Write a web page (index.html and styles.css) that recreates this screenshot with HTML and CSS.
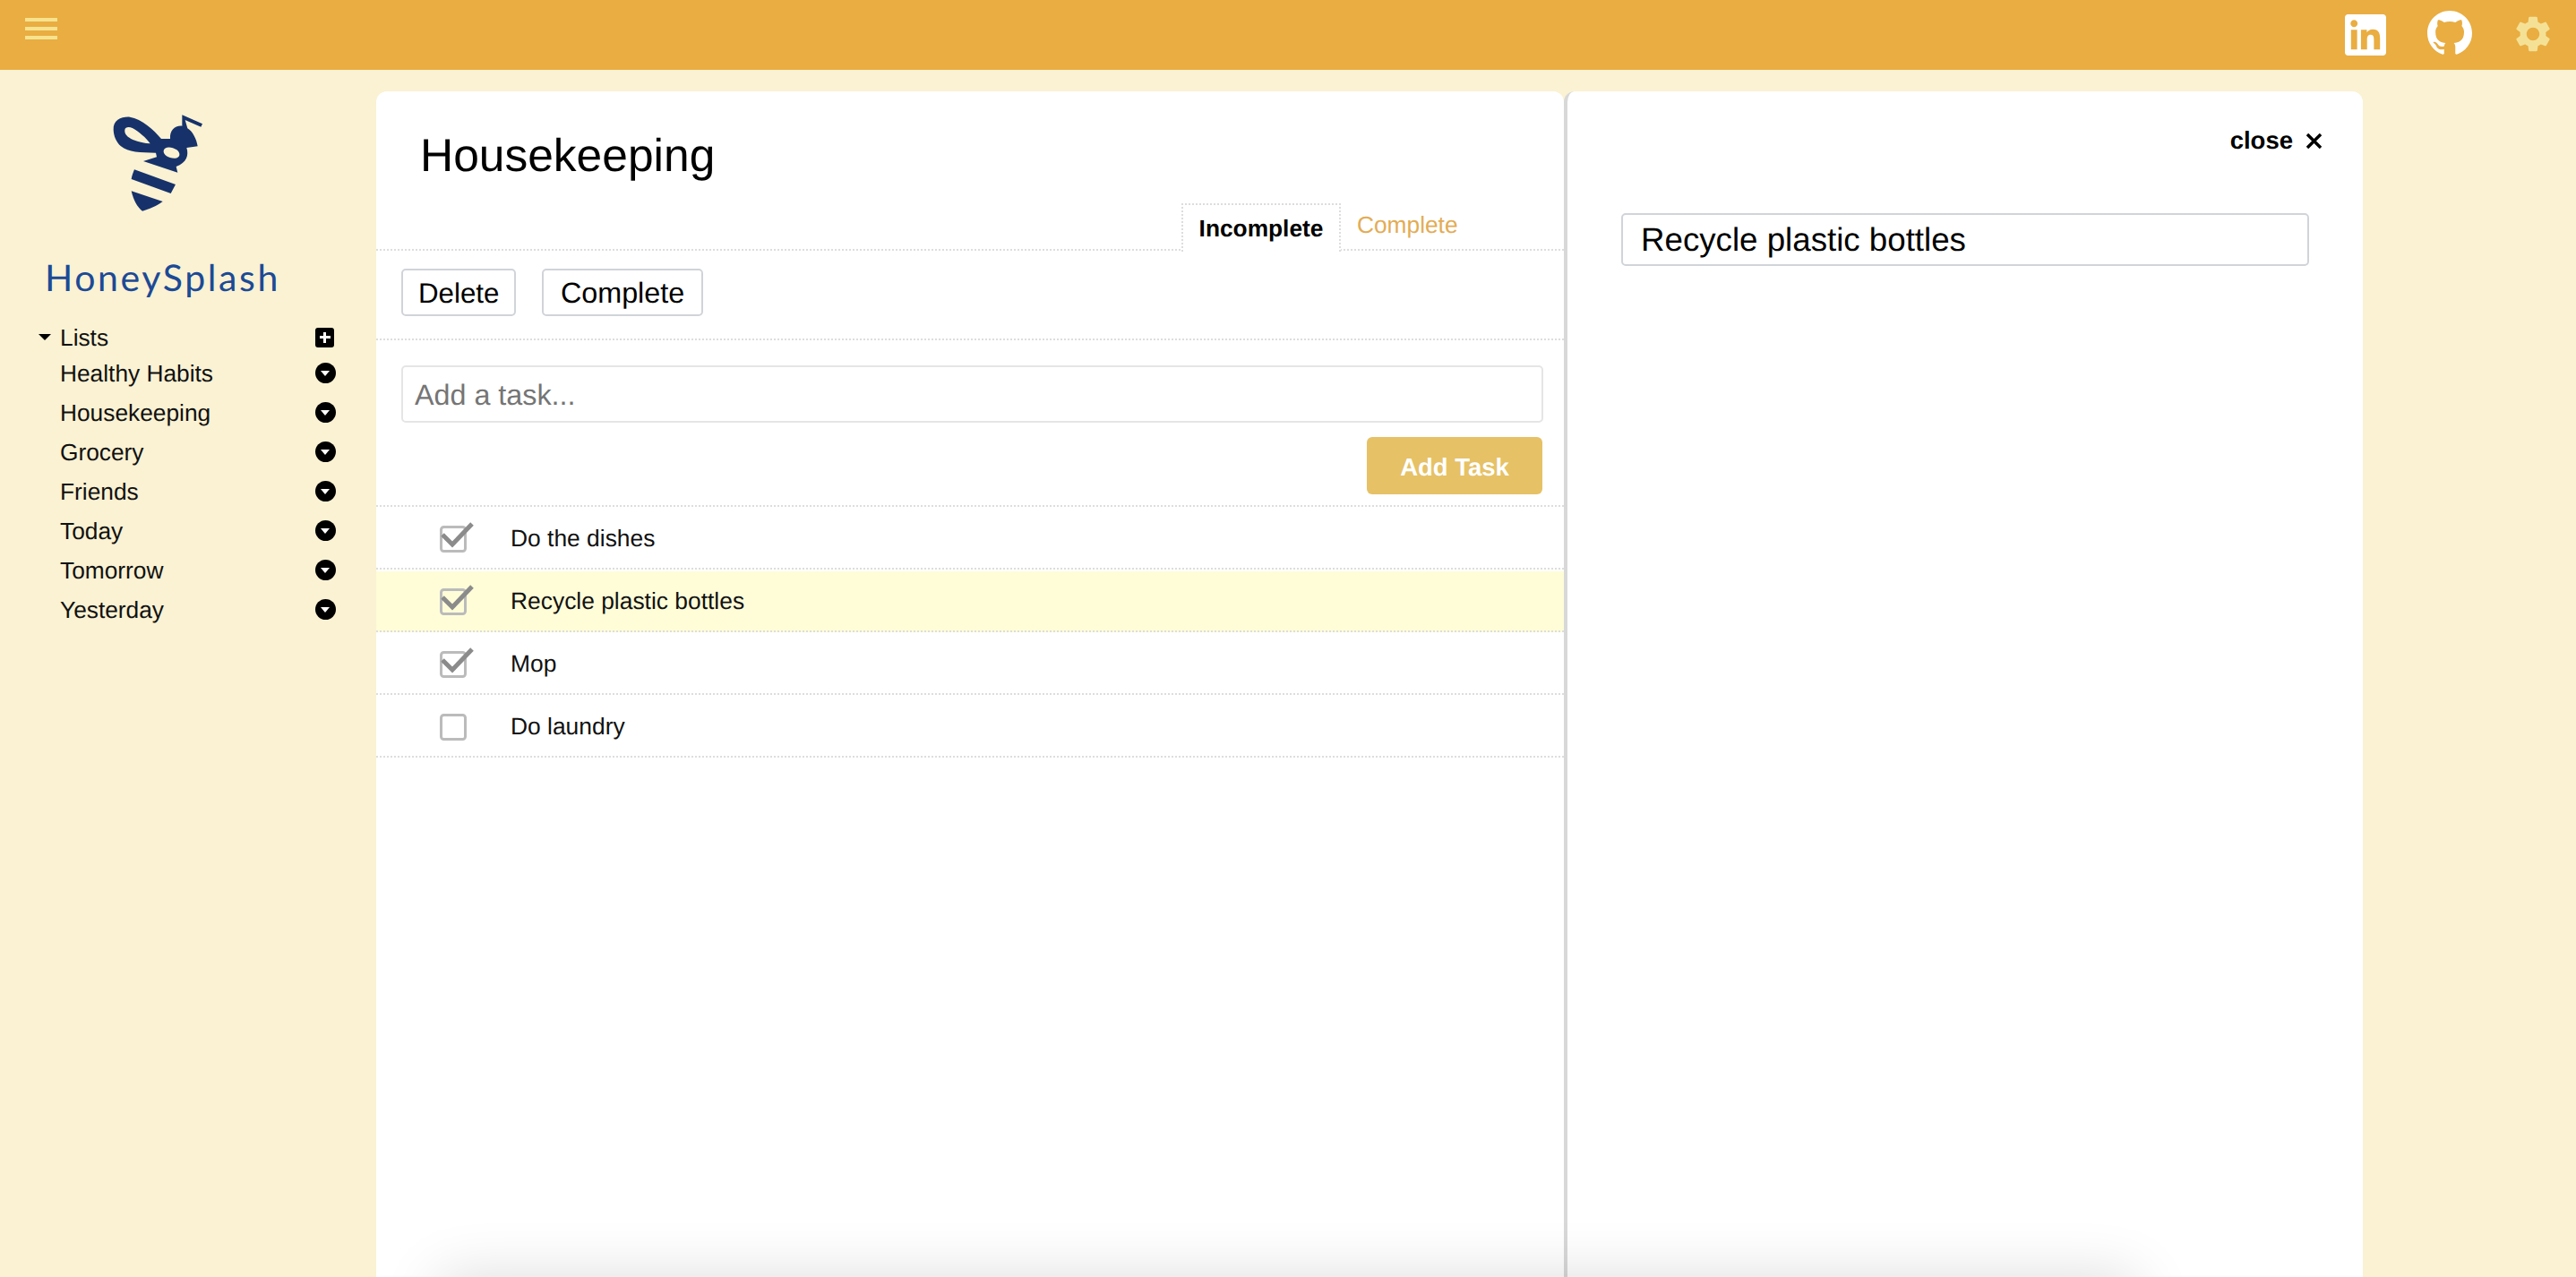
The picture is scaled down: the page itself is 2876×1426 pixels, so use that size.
FILE: index.html
```html
<!DOCTYPE html>
<html lang="en">
<head>
<meta charset="utf-8">
<title>HoneySplash</title>
<link rel="stylesheet" href="styles.css">
</head>
<body>
<header class="topbar">
  <button class="burger" aria-label="Menu"><span></span><span></span><span></span></button>
  <div class="top-icons">
    <svg class="ico-linkedin" viewBox="0 0 24 24"><path d="M20.447 20.452h-3.554v-5.569c0-1.328-.027-3.037-1.852-3.037-1.853 0-2.136 1.445-2.136 2.939v5.667H9.351V9h3.414v1.561h.046c.477-.9 1.637-1.85 3.37-1.85 3.601 0 4.267 2.37 4.267 5.455v6.286zM5.337 7.433c-1.144 0-2.063-.926-2.063-2.065 0-1.138.92-2.063 2.063-2.063 1.14 0 2.064.925 2.064 2.063 0 1.139-.925 2.065-2.064 2.065zm1.782 13.019H3.555V9h3.564v11.452zM22.225 0H1.771C.792 0 0 .774 0 1.729v20.542C0 23.227.792 24 1.771 24h20.451C23.2 24 24 23.227 24 22.271V1.729C24 .774 23.2 0 22.222 0h.003z"/></svg>
    <svg class="ico-github" viewBox="0 0 16 16"><path d="M8 0C3.58 0 0 3.58 0 8c0 3.54 2.29 6.53 5.47 7.59.4.07.55-.17.55-.38 0-.19-.01-.82-.01-1.49-2.01.37-2.53-.49-2.69-.94-.09-.23-.48-.94-.82-1.13-.28-.15-.68-.52-.01-.53.63-.01 1.08.58 1.23.82.72 1.21 1.87.87 2.33.66.07-.52.28-.87.51-1.07-1.78-.2-3.64-.89-3.64-3.95 0-.87.31-1.59.82-2.15-.08-.2-.36-1.02.08-2.12 0 0 .67-.21 2.2.82.64-.18 1.32-.27 2-.27.68 0 1.36.09 2 .27 1.53-1.04 2.2-.82 2.2-.82.44 1.1.16 1.92.08 2.12.51.56.82 1.27.82 2.15 0 3.07-1.87 3.75-3.65 3.95.29.25.54.73.54 1.48 0 1.07-.01 1.93-.01 2.2 0 .21.15.46.55.38A8.013 8.013 0 0016 8c0-4.42-3.58-8-8-8z"/></svg>
    <svg class="ico-gear" viewBox="0 0 24 24"><path d="M19.14 12.94c.04-.3.06-.61.06-.94 0-.32-.02-.64-.07-.94l2.03-1.58c.18-.14.23-.41.12-.61l-1.92-3.32c-.12-.22-.37-.29-.59-.22l-2.39.96c-.5-.38-1.03-.7-1.62-.94l-.36-2.54c-.04-.24-.24-.41-.48-.41h-3.84c-.24 0-.43.17-.47.41l-.36 2.54c-.59.24-1.13.57-1.62.94l-2.39-.96c-.22-.08-.47 0-.59.22L2.74 8.87c-.12.21-.08.47.12.61l2.03 1.58c-.05.3-.09.63-.09.94s.02.64.07.94l-2.03 1.58c-.18.14-.23.41-.12.61l1.92 3.32c.12.22.37.29.59.22l2.39-.96c.5.38 1.03.7 1.62.94l.36 2.54c.05.24.24.41.48.41h3.84c.24 0 .44-.17.47-.41l.36-2.54c.59-.24 1.13-.56 1.62-.94l2.39.96c.22.08.47 0 .59-.22l1.92-3.32c.12-.22.07-.47-.12-.61l-2.01-1.58zM12 15.6c-1.98 0-3.6-1.62-3.6-3.6s1.62-3.6 3.6-3.6 3.6 1.62 3.6 3.6-1.62 3.6-3.6 3.6z"/></svg>
  </div>
</header>

<div class="layout">
  <aside class="sidebar">
    <svg class="bee" viewBox="0 0 450 420">
      <path fill-rule="evenodd" d="M80 105C78 72 108 60 135 62C175 68 215 105 240 135L270 135C268 108 285 90 310 92L310 55L378 85L373 95L320 72L328 100C345 110 358 135 362 160L325 165C333 190 325 215 290 228L295 248L180 210L225 196L222 182C170 182 130 180 105 160C88 145 81 125 80 105ZM118 105C116 120 128 130 145 138C165 146 185 150 203 151C188 130 165 112 145 100C132 94 120 95 118 105ZM248 175C246 190 268 202 288 200C305 198 305 182 292 172C275 160 250 160 248 175Z"/>
      <path d="M150 238L288 288L272 318L140 270C142 258 146 248 150 238Z"/>
      <path d="M140 310L245 345C222 362 200 370 177 377C160 365 147 340 140 310Z"/>
    </svg>
    <div class="brand">HoneySplash</div>
    <nav class="lists">
      <div class="list-head">
        <span class="caret"></span><span class="list-name">Lists</span>
        <span class="plus"></span>
      </div>
      <div class="list-row"><span class="list-name">Healthy Habits</span><span class="drop"></span></div>
      <div class="list-row"><span class="list-name">Housekeeping</span><span class="drop"></span></div>
      <div class="list-row"><span class="list-name">Grocery</span><span class="drop"></span></div>
      <div class="list-row"><span class="list-name">Friends</span><span class="drop"></span></div>
      <div class="list-row"><span class="list-name">Today</span><span class="drop"></span></div>
      <div class="list-row"><span class="list-name">Tomorrow</span><span class="drop"></span></div>
      <div class="list-row"><span class="list-name">Yesterday</span><span class="drop"></span></div>
    </nav>
  </aside>

  <main class="card">
    <section class="tasks">
      <div class="tasks-head">
        <h1 class="title">Housekeeping</h1>
        <div class="tabs">
          <span class="tab tab-active">Incomplete</span>
          <span class="tab tab-idle">Complete</span>
        </div>
      </div>
      <div class="toolbar">
        <button class="btn">Delete</button>
        <button class="btn btn-wide">Complete</button>
      </div>
      <div class="add">
        <input class="add-input" placeholder="Add a task...">
        <button class="add-btn">Add Task</button>
      </div>
      <div class="row">
        <svg class="check" viewBox="0 0 30 30"><rect x="1.5" y="1.5" width="27" height="27" rx="3"/><polyline points="3,10 14,21 36,-2"/></svg>
        <span>Do the dishes</span>
      </div>
      <div class="row row-selected">
        <svg class="check" viewBox="0 0 30 30"><rect x="1.5" y="1.5" width="27" height="27" rx="3"/><polyline points="3,10 14,21 36,-2"/></svg>
        <span>Recycle plastic bottles</span>
      </div>
      <div class="row">
        <svg class="check" viewBox="0 0 30 30"><rect x="1.5" y="1.5" width="27" height="27" rx="3"/><polyline points="3,10 14,21 36,-2"/></svg>
        <span>Mop</span>
      </div>
      <div class="row">
        <svg class="check" viewBox="0 0 30 30"><rect x="1.5" y="1.5" width="27" height="27" rx="3"/></svg>
        <span>Do laundry</span>
      </div>
    </section>
    <section class="detail">
      <div class="close">
        <span>close</span>
        <svg class="close-x" viewBox="0 0 17 17"><path d="M1 1L16 16M16 1L1 16"/></svg>
      </div>
      <input class="detail-input" value="Recycle plastic bottles">
    </section>
  </main>
</div>
<div class="foot-shadow"></div>
</body>
</html>
```

FILE: styles.css
```css
html, body {
  margin: 0;
  height: 100%;
  overflow: hidden;
}
body {
  position: relative;
  background: #faf2d3;
  color: #000;
  font-family: "Liberation Sans", Arial, sans-serif;
  text-rendering: geometricPrecision;
  display: flex;
  flex-direction: column;
}
button, input {
  font-family: inherit;
  box-sizing: border-box;
  text-rendering: geometricPrecision;
}

/* top bar */
.topbar {
  flex: none;
  height: 78px;
  background: #e9ad41;
  display: flex;
  justify-content: space-between;
  align-items: flex-start;
  padding: 20px 24px 0 28px;
  box-sizing: border-box;
}
.burger {
  display: flex;
  flex-direction: column;
  gap: 6px;
  width: 36px;
  padding: 0;
  background: none;
  border: 0;
}
.burger span {
  display: block;
  height: 4px;
  background: #f7e38f;
}
.top-icons {
  display: flex;
  align-items: flex-start;
  margin-top: -8px;
}
.ico-linkedin {
  width: 46px;
  height: 46px;
  margin-top: 4px;
  fill: #fff;
}
.ico-github {
  width: 50px;
  height: 50px;
  margin-left: 46px;
  fill: #fff;
}
.ico-gear {
  width: 48px;
  height: 48px;
  margin: 2px 0 0 44px;
  fill: #f5e196;
}

/* layout */
.layout {
  flex: 1;
  min-height: 0;
  display: flex;
}
.sidebar {
  flex: none;
  width: 420px;
  box-sizing: border-box;
  padding: 32px 45px 0 0;
}
.bee {
  display: block;
  width: 150px;
  height: 140px;
  margin-left: 100px;
  fill: #17326a;
}
.brand {
  margin: 38px 0 24px 50px;
  font-family: "Lato", sans-serif;
  font-weight: 400;
  font-size: 41px;
  line-height: 44px;
  letter-spacing: 2.6px;
  color: #1c4a96;
}
.list-head, .list-row {
  display: flex;
  align-items: center;
  font-size: 26.3px;
  padding-left: 67px;
  position: relative;
}
.list-head { height: 39px; padding-top: 2px; margin-bottom: -2px; }
.list-row { height: 44px; }
.list-name { flex: 1; color: #111; }
.caret {
  position: absolute;
  left: 43px;
  top: 17px;
  border-left: 7px solid transparent;
  border-right: 7px solid transparent;
  border-top: 7px solid #000;
}
.plus {
  position: relative;
  width: 21px;
  height: 22px;
  margin-right: 2px;
  margin-top: -2px;
  background: #000;
  border-radius: 3px;
}
.plus::before, .plus::after {
  content: "";
  position: absolute;
  background: #fff;
}
.plus::before { left: 5px; right: 4px; top: 9px; height: 3px; }
.plus::after { top: 5px; bottom: 5px; left: 9px; width: 3px; }
.drop {
  position: relative;
  width: 23px;
  height: 23px;
  margin-top: -1px;
  background: #000;
  border-radius: 50%;
}
.drop::after {
  content: "";
  position: absolute;
  left: 6px;
  top: 9px;
  border-left: 5.5px solid transparent;
  border-right: 5.5px solid transparent;
  border-top: 6px solid #fff;
}

/* card */
.card {
  flex: none;
  width: 2218px;
  margin-top: 24px;
  display: flex;
}
.tasks {
  flex: none;
  width: 1326px;
  background: #fff;
  border-radius: 12px 12px 0 0;
}
.tasks-head {
  padding-top: 42px;
  height: 134px;
  border-bottom: 2px dotted #ddd;
}
.title {
  margin: 0 0 25px 49px;
  font-size: 51.5px;
  line-height: 58px;
  font-weight: 400;
}
.tabs {
  display: flex;
  align-items: flex-start;
  margin-left: 899px;
  font-size: 26.3px;
}
.tab { box-sizing: border-box; height: 54px; }
.tab-active {
  position: relative;
  width: 178px;
  border: 2px dotted #ddd;
  border-bottom: 0;
  background: #fff;
  font-weight: 700;
  text-align: center;
  line-height: 52px;
}
.tab-idle {
  margin-left: 18px;
  color: #e3ac55;
  line-height: 48px;
}
.toolbar {
  height: 78px;
  padding: 20px 0 0 28px;
  display: flex;
  align-items: flex-start;
  gap: 29px;
  border-bottom: 2px dotted #ddd;
}
.btn {
  height: 53px;
  padding: 2px 17px 0;
  background: #fff;
  color: #000;
  border: 2px solid #d0d4d9;
  border-radius: 5px;
  font-size: 31.3px;
}
.btn-wide {
  padding: 2px 18.5px 0;
  font-size: 32.3px;
}
.add {
  padding: 28px 23px 12px 28px;
  display: flex;
  flex-direction: column;
  align-items: flex-end;
  gap: 16px;
  border-bottom: 2px dotted #ddd;
}
.add-input {
  width: 100%;
  height: 64px;
  padding: 2px 13px 0;
  border: 2px solid #e5e5e5;
  border-radius: 5px;
  font-size: 32.3px;
  color: #000;
}
.add-input::placeholder { color: #757575; opacity: 1; }
.add-btn {
  width: 196px;
  height: 64px;
  padding-top: 4px;
  margin-right: 1px;
  background: #e6c166;
  color: #fff;
  border: 0;
  border-radius: 6px;
  font-size: 27.5px;
  font-weight: 700;
}
.row {
  height: 68px;
  display: flex;
  align-items: center;
  padding-left: 71px;
  gap: 49px;
  font-size: 26.4px;
  color: #111;
  border-bottom: 2px dotted #ddd;
}
.row span { padding-top: 2px; }
.row-selected {
  background: #fefdd8;
  box-shadow: inset 0 2px 0 #fff;
}
.check {
  flex: none;
  width: 30px;
  height: 30px;
  margin-top: 4px;
  overflow: visible;
  fill: none;
}
.check rect { stroke: #bbb; stroke-width: 3; fill: transparent; }
.check polyline { stroke: #8b8b8b; stroke-width: 5; }

/* detail panel */
.detail {
  flex: 1;
  background: #fff;
  border-left: 4px solid #d8d8d8;
  border-radius: 12px 12px 0 0;
  padding: 38px 60px 0;
}
.close {
  height: 34px;
  margin: 0 -14px 64px 0;
  display: flex;
  justify-content: flex-end;
  align-items: center;
  gap: 15px;
  font-size: 27.5px;
  font-weight: 700;
}
.close-x {
  width: 17px;
  height: 17px;
  fill: none;
  stroke: #000;
  stroke-width: 3.5;
}
.detail-input {
  display: block;
  width: 100%;
  height: 59px;
  padding: 0 20px;
  border: 2px solid #d0d4d9;
  border-radius: 5px;
  font-size: 36.7px;
  color: #000;
}

/* shadow of the element just under the fold: a zero-height strip, offset and spread */
.foot-shadow {
  position: absolute;
  left: 540px;
  bottom: 0;
  width: 1795px;
  height: 0;
  box-shadow: 0 50px 66px 50px rgba(0, 0, 0, .14);
}
```
